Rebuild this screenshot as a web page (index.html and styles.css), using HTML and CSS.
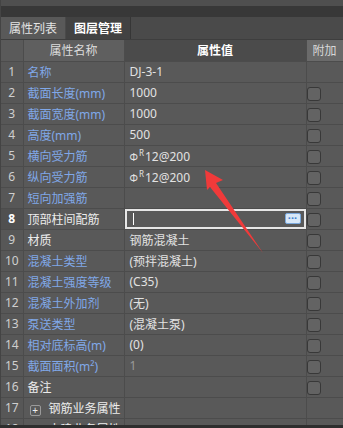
FILE: index.html
```html
<!DOCTYPE html>
<html lang="zh-CN">
<head>
  <meta charset="UTF-8">
  <title>属性列表</title>
  <link rel="stylesheet" href="styles.css">
</head>
<body>
  <div class="panel">
    <div class="top-strip"></div>
    <div class="dark-strip"></div>
    <div class="tabs">
      <div class="tab active">属性列表</div>
      <div class="tab">图层管理</div>
    </div>

    <table class="props">
      <colgroup>
        <col class="c-num"><col class="c-name"><col class="c-val"><col class="c-extra">
      </colgroup>
      <thead>
        <tr>
          <th class="num"></th>
          <th class="h-name">属性名称</th>
          <th class="h-val">属性值</th>
          <th class="h-extra">附加</th>
        </tr>
      </thead>
      <tbody>
        <tr><td class="num">1</td><td class="name">名称</td><td class="val">DJ-3-1</td><td class="extra"></td></tr>
        <tr><td class="num">2</td><td class="name">截面长度(mm)</td><td class="val">1000</td><td class="extra"><span class="check"></span></td></tr>
        <tr><td class="num">3</td><td class="name">截面宽度(mm)</td><td class="val">1000</td><td class="extra"><span class="check"></span></td></tr>
        <tr><td class="num">4</td><td class="name">高度(mm)</td><td class="val">500</td><td class="extra"><span class="check"></span></td></tr>
        <tr><td class="num">5</td><td class="name">横向受力筋</td><td class="val"><span class="bar">Φ</span><sup>R</sup>12@200</td><td class="extra"><span class="check"></span></td></tr>
        <tr><td class="num">6</td><td class="name">纵向受力筋</td><td class="val"><span class="bar">Φ</span><sup>R</sup>12@200</td><td class="extra"><span class="check"></span></td></tr>
        <tr><td class="num">7</td><td class="name">短向加强筋</td><td class="val"></td><td class="extra"><span class="check"></span></td></tr>
        <tr class="current">
          <td class="num">8</td><td class="name plain">顶部柱间配筋</td>
          <td class="val editing">
            <div class="editor"><span class="caret"></span><span class="more">···</span></div>
          </td>
          <td class="extra"><span class="check"></span></td>
        </tr>
        <tr><td class="num">9</td><td class="name plain">材质</td><td class="val">钢筋混凝土</td><td class="extra"><span class="check"></span></td></tr>
        <tr><td class="num">10</td><td class="name">混凝土类型</td><td class="val">(预拌混凝土)</td><td class="extra"><span class="check"></span></td></tr>
        <tr><td class="num">11</td><td class="name">混凝土强度等级</td><td class="val">(C35)</td><td class="extra"><span class="check"></span></td></tr>
        <tr><td class="num">12</td><td class="name">混凝土外加剂</td><td class="val">(无)</td><td class="extra"><span class="check"></span></td></tr>
        <tr><td class="num">13</td><td class="name">泵送类型</td><td class="val">(混凝土泵)</td><td class="extra"><span class="check"></span></td></tr>
        <tr><td class="num">14</td><td class="name">相对底标高(m)</td><td class="val">(0)</td><td class="extra"><span class="check"></span></td></tr>
        <tr><td class="num">15</td><td class="name">截面面积(m²)</td><td class="val muted">1</td><td class="extra"><span class="check"></span></td></tr>
        <tr><td class="num">16</td><td class="name plain">备注</td><td class="val"></td><td class="extra"><span class="check"></span></td></tr>
        <tr><td class="num">17</td><td class="name plain"><span class="expand">+</span>钢筋业务属性</td><td class="val"></td><td class="extra"></td></tr>
        <tr><td class="num">18</td><td class="name plain"><span class="expand">+</span>土建业务属性</td><td class="val"></td><td class="extra"></td></tr>
      </tbody>
    </table>

    <svg class="arrow" width="343" height="428" viewBox="0 0 343 428">
      <polygon points="205,170 223,180 216,183 263,253 210,187 207,190" fill="#f03a3a"/>
    </svg>
  </div>
  <div class="bottom-strip"></div>
</body>
</html>
```

FILE: styles.css
```css
* {
  margin: 0;
  padding: 0;
  box-sizing: border-box;
}

body {
  width: 343px;
  height: 428px;
  overflow: hidden;
  background: #595959;
  font-family: "Noto Sans", "Noto Sans CJK SC", sans-serif;
  font-size: 12px;
  color: #e2e2e2;
}

.panel {
  position: relative;
  height: 425px;
  overflow: hidden;
  border-left: 1px solid #444;
}

.top-strip {
  height: 6px;
  background: #4f4f4f;
}

.dark-strip {
  height: 11px;
  background: #383838;
}

.tabs {
  display: flex;
  height: 23px;
  background: #4a4a4a;
  border-bottom: 1px solid #3e3e3e;
}

.tab {
  width: 65px;
  line-height: 23px;
  text-align: center;
  font-size: 12px;
  font-weight: bold;
  color: #ffffff;
  background: #424242;
  border-right: 1px solid #363636;
}

.tab.active {
  font-weight: normal;
  color: #e4e4e4;
  background: #595959;
  border-right: 1px solid #4a4a4a;
}

.props {
  width: 342px;
  border-collapse: collapse;
  table-layout: fixed;
}

.c-num { width: 22px; }
.c-name { width: 101px; }
.c-val { width: 182px; }
.c-extra { width: 37px; }

.props th,
.props td {
  height: 21px;
  padding: 0;
  border: 1px solid #4c4c4c;
  white-space: nowrap;
  overflow: hidden;
  font-weight: normal;
  text-align: left;
}

.props tr > :first-child {
  border-left: none;
}

.props thead th {
  border-top: none;
  text-align: center;
  color: #dcdcdc;
  background: #5f5f5f;
}

.props thead .num {
  background: #5a5a5a;
}

.props thead .h-val {
  background: #4b4b4b;
  color: #ffffff;
  font-weight: bold;
}

.props thead .h-extra {
  background: #6a6a6a;
  color: #d8d8d8;
}

.num {
  text-align: center !important;
  color: #cfcfcf;
  background: #575757;
}

.name {
  padding-left: 4px !important;
  color: #80a8e8;
}

.name.plain {
  color: #ececec;
}

.val {
  padding-left: 5px !important;
  color: #e2e2e2;
}

.val.muted {
  color: #9a9a9a;
}

.bar {
  font-size: 10px;
  margin-right: 1px;
}

sup {
  font-size: 8px;
  vertical-align: 5px;
  margin-right: 1px;
}

.current .num {
  color: #ffffff;
  font-weight: bold;
  background: #505050;
}

.val.editing {
  padding: 0 !important;
}

.editor {
  display: flex;
  align-items: center;
  justify-content: space-between;
  height: 20px;
  padding: 0 3px 0 6px;
  border: 2px solid #e6e6e6;
  background: #595959;
}

.caret {
  width: 1px;
  height: 12px;
  background: #ffffff;
}

.more {
  width: 16px;
  height: 11px;
  line-height: 7px;
  text-align: center;
  font-size: 11px;
  font-weight: bold;
  color: #3c7ed0;
  background: #d8e8f8;
  border: 1px solid #7aa8dc;
  border-radius: 2px;
}

.extra {
  text-align: center;
}

.check {
  display: inline-block;
  width: 14px;
  height: 14px;
  margin-top: 3px;
  vertical-align: top;
  background: #636363;
  border: 1px solid #383838;
  border-radius: 3px;
}

.expand {
  display: inline-block;
  width: 11px;
  height: 11px;
  margin: 0 8px 0 2px;
  line-height: 9px;
  text-align: center;
  font-size: 10px;
  color: #eeeeee;
  border: 1px solid #9a9a9a;
  border-radius: 2px;
  vertical-align: -1px;
}

.arrow {
  position: absolute;
  left: -1px;
  top: 0;
  pointer-events: none;
}

.bottom-strip {
  height: 3px;
  background: #2e2e2e;
}
```
